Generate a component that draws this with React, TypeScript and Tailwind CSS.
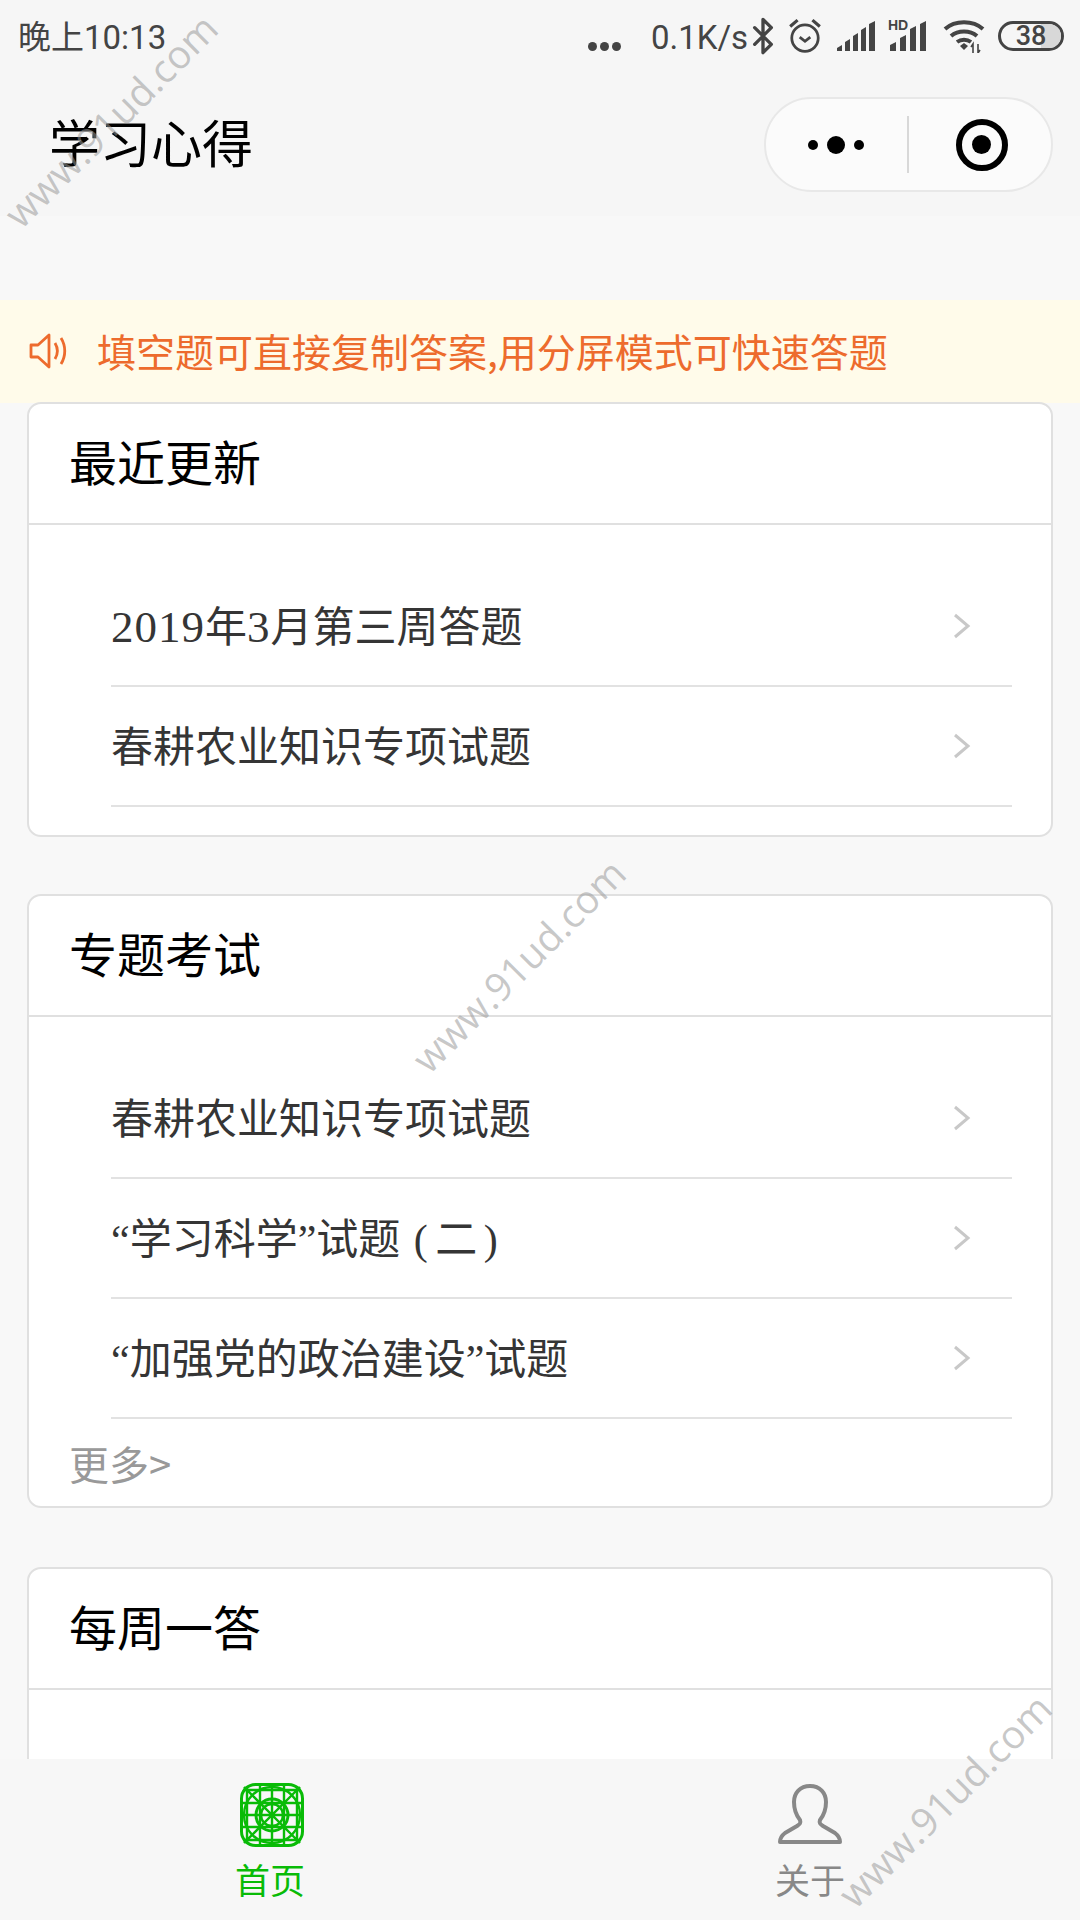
import React from 'react';
import { Bluetooth } from 'lucide-react';

const Chevron = () => (
  <svg width="18" height="26" viewBox="0 0 18 26" fill="none" className="shrink-0">
    <path d="M2 2l13 11L2 24" stroke="#c8c8c8" strokeWidth="3" />
  </svg>
);

const Row: React.FC<{ children: React.ReactNode }> = ({ children }) => (
  <div className="flex items-center justify-between h-[120px] border-b-2 border-[#e2e2e2] pr-[41px]">
    <span className="text-[42px] leading-none pt-[3px] text-[#353535] font-['Liberation_Serif','Noto_Sans_CJK_SC',serif]">{children}</span>
    <Chevron />
  </div>
);

const Card: React.FC<{ title: string; className?: string; children?: React.ReactNode }> = ({ title, className, children }) => (
  <div className={`mx-[27px] bg-white border-2 border-[#e0e0e0] rounded-[14px] shrink-0 ${className || ''}`}>
    <div className="h-[121px] border-b-2 border-[#e0e0e0] flex items-center pl-[40px] pb-[8px] text-[48px] leading-none text-black">{title}</div>
    {children}
  </div>
);

const Signal = () => (
  <svg width="40" height="30" viewBox="0 0 40 30" fill="#444">
    <path d="M0 30v-3l5-3v6zM8 30v-9l5-3v12zM16 30V15l5-3v18zM24 30V9l5-3v24zM32 30V3l6-3v30z" />
  </svg>
);

const SignalHd = () => (
  <div className="relative w-[40px] h-[30px]">
    <span className="absolute left-0 top-[-3px] text-[14px] leading-none font-bold text-[#444] font-['Liberation_Sans',sans-serif]">HD</span>
    <svg width="40" height="30" viewBox="0 0 40 30" fill="#444" className="absolute left-0 top-0">
      <path d="M2 30v-6l6-3v9zM12 30V17l6-3v16zM22 30V8l6-3v25zM32 30V3l6-3v30z" />
    </svg>
  </div>
);

const Wifi = () => (
  <svg width="42" height="34" viewBox="0 0 42 34" fill="none">
    <path d="M2 10c10-9 28-9 38 0M8 17c7-6 19-6 26 0M14 23c4-3 10-3 14 0" stroke="#444" strokeWidth="4" />
    <path d="M17 27l4-3 4 3-4 4z" fill="#444" />
    <path d="M30 34v-9l-2 3M35 25v9l2-3" stroke="#444" strokeWidth="1.6" />
  </svg>
);

const Alarm = () => (
  <svg width="34" height="36" viewBox="0 0 32 34" fill="none" stroke="#444">
    <circle cx="16" cy="19" r="12.5" strokeWidth="2.6" />
    <path d="M11 18l5 4 5-4" strokeWidth="2.6" />
    <path d="M2 8l7-6M30 8l-7-6" strokeWidth="3" />
  </svg>
);

const TabIconHome = () => (
  <svg width="64" height="64" viewBox="0 0 64 64" fill="none" stroke="#09bb07" strokeWidth="2.4">
    <rect x="1.5" y="1.5" width="61" height="61" rx="14" strokeWidth="3" />
    <path d="M7 3v58M20 2v60M32 2v60M44 2v60M57 3v58M3 7h58M2 20h60M2 32h60M2 44h60M3 57h58M4 4l56 56M60 4L4 60" />
    <circle cx="32" cy="32" r="16" strokeWidth="3" />
    <circle cx="32" cy="32" r="28" />
    <circle cx="32" cy="32" r="11" />
  </svg>
);

const TabIconUser = () => (
  <svg width="64" height="64" viewBox="0 0 64 64" fill="none" stroke="#888" strokeWidth="4" strokeLinejoin="round">
    <path d="M32 3c-10 0-16 7-16 16 0 8 2 13 6 18 1 3 0 4-3 6l-12 7c-4 3-5 5-5 9h60c0-4-1-6-5-9l-12-7c-3-2-4-3-3-6 4-5 6-10 6-18 0-9-6-16-16-16z" />
  </svg>
);

const Watermark: React.FC<{ className: string }> = ({ className }) => (
  <span className={`absolute -translate-x-1/2 -translate-y-1/2 -rotate-45 text-[39px] leading-none whitespace-nowrap text-[#999999]/55 font-['Open_Sans',sans-serif] ${className}`}>
    www.91ud.com
  </span>
);

export default function App() {
  return (
    <div className="relative flex flex-col h-[1920px] w-[1080px] overflow-hidden bg-[#f8f8f8] font-['Noto_Sans_CJK_SC',sans-serif]">
      <div className="h-[216px] bg-[#f6f6f6] shrink-0 flex flex-col">
        {/* status bar */}
        <div className="h-[72px] flex items-center pl-[18px] pr-[16px] text-[#444]">
          <span className="text-[33px] leading-none pt-[3px] font-['Roboto','Noto_Sans_CJK_SC',sans-serif]">晚上10:13</span>
          <div className="ml-auto flex items-center">
            <div className="flex gap-[3px] mt-[20px] mr-[30px]">
              <span className="w-[9px] h-[9px] rounded-full bg-[#444]" />
              <span className="w-[9px] h-[9px] rounded-full bg-[#444]" />
              <span className="w-[9px] h-[9px] rounded-full bg-[#444]" />
            </div>
            <span className="text-[33px] leading-none pt-[2px] font-['Roboto',sans-serif] w-[100px]">0.1K/s</span>
            <Bluetooth size={40} strokeWidth={2} className="-ml-[8px] mr-[5px]" />
            <Alarm />
            <div className="ml-[15px] mr-[11px]"><Signal /></div>
            <SignalHd />
            <div className="ml-[15px] mr-[13px]"><Wifi /></div>
            <div className="relative w-[66px] h-[30px] rounded-[15px] border-[3px] border-[#444] flex items-center justify-center overflow-hidden">
              <span className="absolute right-0 top-0 bottom-0 w-[20px] bg-[#d8d8d8]" />
              <span className="relative text-[27px] leading-none font-medium font-['Roboto',sans-serif]">38</span>
            </div>
          </div>
        </div>
        {/* nav */}
        <div className="flex items-center pl-[49px] pr-[27px] mt-[25px]">
          <span className="text-[51px] leading-none mb-[6px] text-black">学习心得</span>
          <div className="ml-auto w-[289px] h-[95px] rounded-[48px] bg-[#fbfbfb] border-2 border-[#e8e8e8] flex items-center">
            <div className="w-[139px] flex items-center justify-center gap-[9px]">
              <span className="w-[10px] h-[10px] rounded-full bg-black" />
              <span className="w-[18px] h-[18px] rounded-full bg-black" />
              <span className="w-[10px] h-[10px] rounded-full bg-black" />
            </div>
            <div className="ml-[2px] w-[2px] h-[57px] bg-[#d8d8d8]" />
            <div className="flex-1 flex items-center justify-center pl-[3px]">
              <span className="w-[52px] h-[52px] rounded-full border-[6px] border-black flex items-center justify-center">
                <span className="w-[19px] h-[19px] rounded-full bg-black" />
              </span>
            </div>
          </div>
        </div>
      </div>

      <div className="flex-1 min-h-0 overflow-hidden flex flex-col pt-[84px]">
        <div className="h-[103px] shrink-0 bg-[#fffbea] flex items-center pl-[29px] pb-[2px] text-[39px] leading-none text-[#ed6b2d]">
          <svg width="38" height="40" viewBox="0 0 38 36" fill="none" stroke="#ed6b2d" strokeWidth="2.8" strokeLinejoin="round" className="mr-[30px] shrink-0">
            <path d="M2 12h7L20 2v32L9 24H2z" />
            <path d="M26 10c3 5 3 11 0 16M32 5c5 8 5 18 0 26" />
          </svg>
          填空题可直接复制答案,用分屏模式可快速答题
        </div>

        <Card title="最近更新" className="-mt-[1px]">
          <div className="pt-[42px] pb-[28px] pl-[82px] pr-[39px]">
            <Row><span className="text-[45px] tracking-[1px]">2019</span>年<span className="text-[45px] tracking-[1px]">3</span>月第三周答题</Row>
            <Row>春耕农业知识专项试题</Row>
          </div>
        </Card>

        <Card title="专题考试" className="mt-[57px]">
          <div className="pt-[42px] pl-[82px] pr-[39px]">
            <Row>春耕农业知识专项试题</Row>
            <Row>“学习科学”试题 <span className="ml-[3px] -mr-[3px]">(</span> 二 <span className="-ml-[4px]">)</span></Row>
            <Row>“加强党的政治建设”试题</Row>
          </div>
          <div className="h-[87px] flex items-center pl-[40px] text-[40px] leading-none text-[#999]">更多&gt;</div>
        </Card>

        <Card title="每周一答" className="mt-[59px] h-[300px]" />
      </div>

      <div className="h-[161px] shrink-0 bg-[#f7f7f7] grid grid-cols-2 relative">
        <div className="flex flex-col items-center pt-[24px]">
          <div className="ml-[4px]"><TabIconHome /></div>
          <span className="mt-[12px] text-[35px] leading-[40px] text-[#09bb07]">首页</span>
        </div>
        <div className="flex flex-col items-center pt-[24px]">
          <TabIconUser />
          <span className="mt-[12px] text-[35px] leading-[40px] text-[#888]">关于</span>
        </div>
      </div>

      <Watermark className="left-[110px] top-[120px]" />
      <Watermark className="left-[518px] top-[965px]" />
      <Watermark className="left-[944px] top-[1800px]" />
    </div>
  );
}
